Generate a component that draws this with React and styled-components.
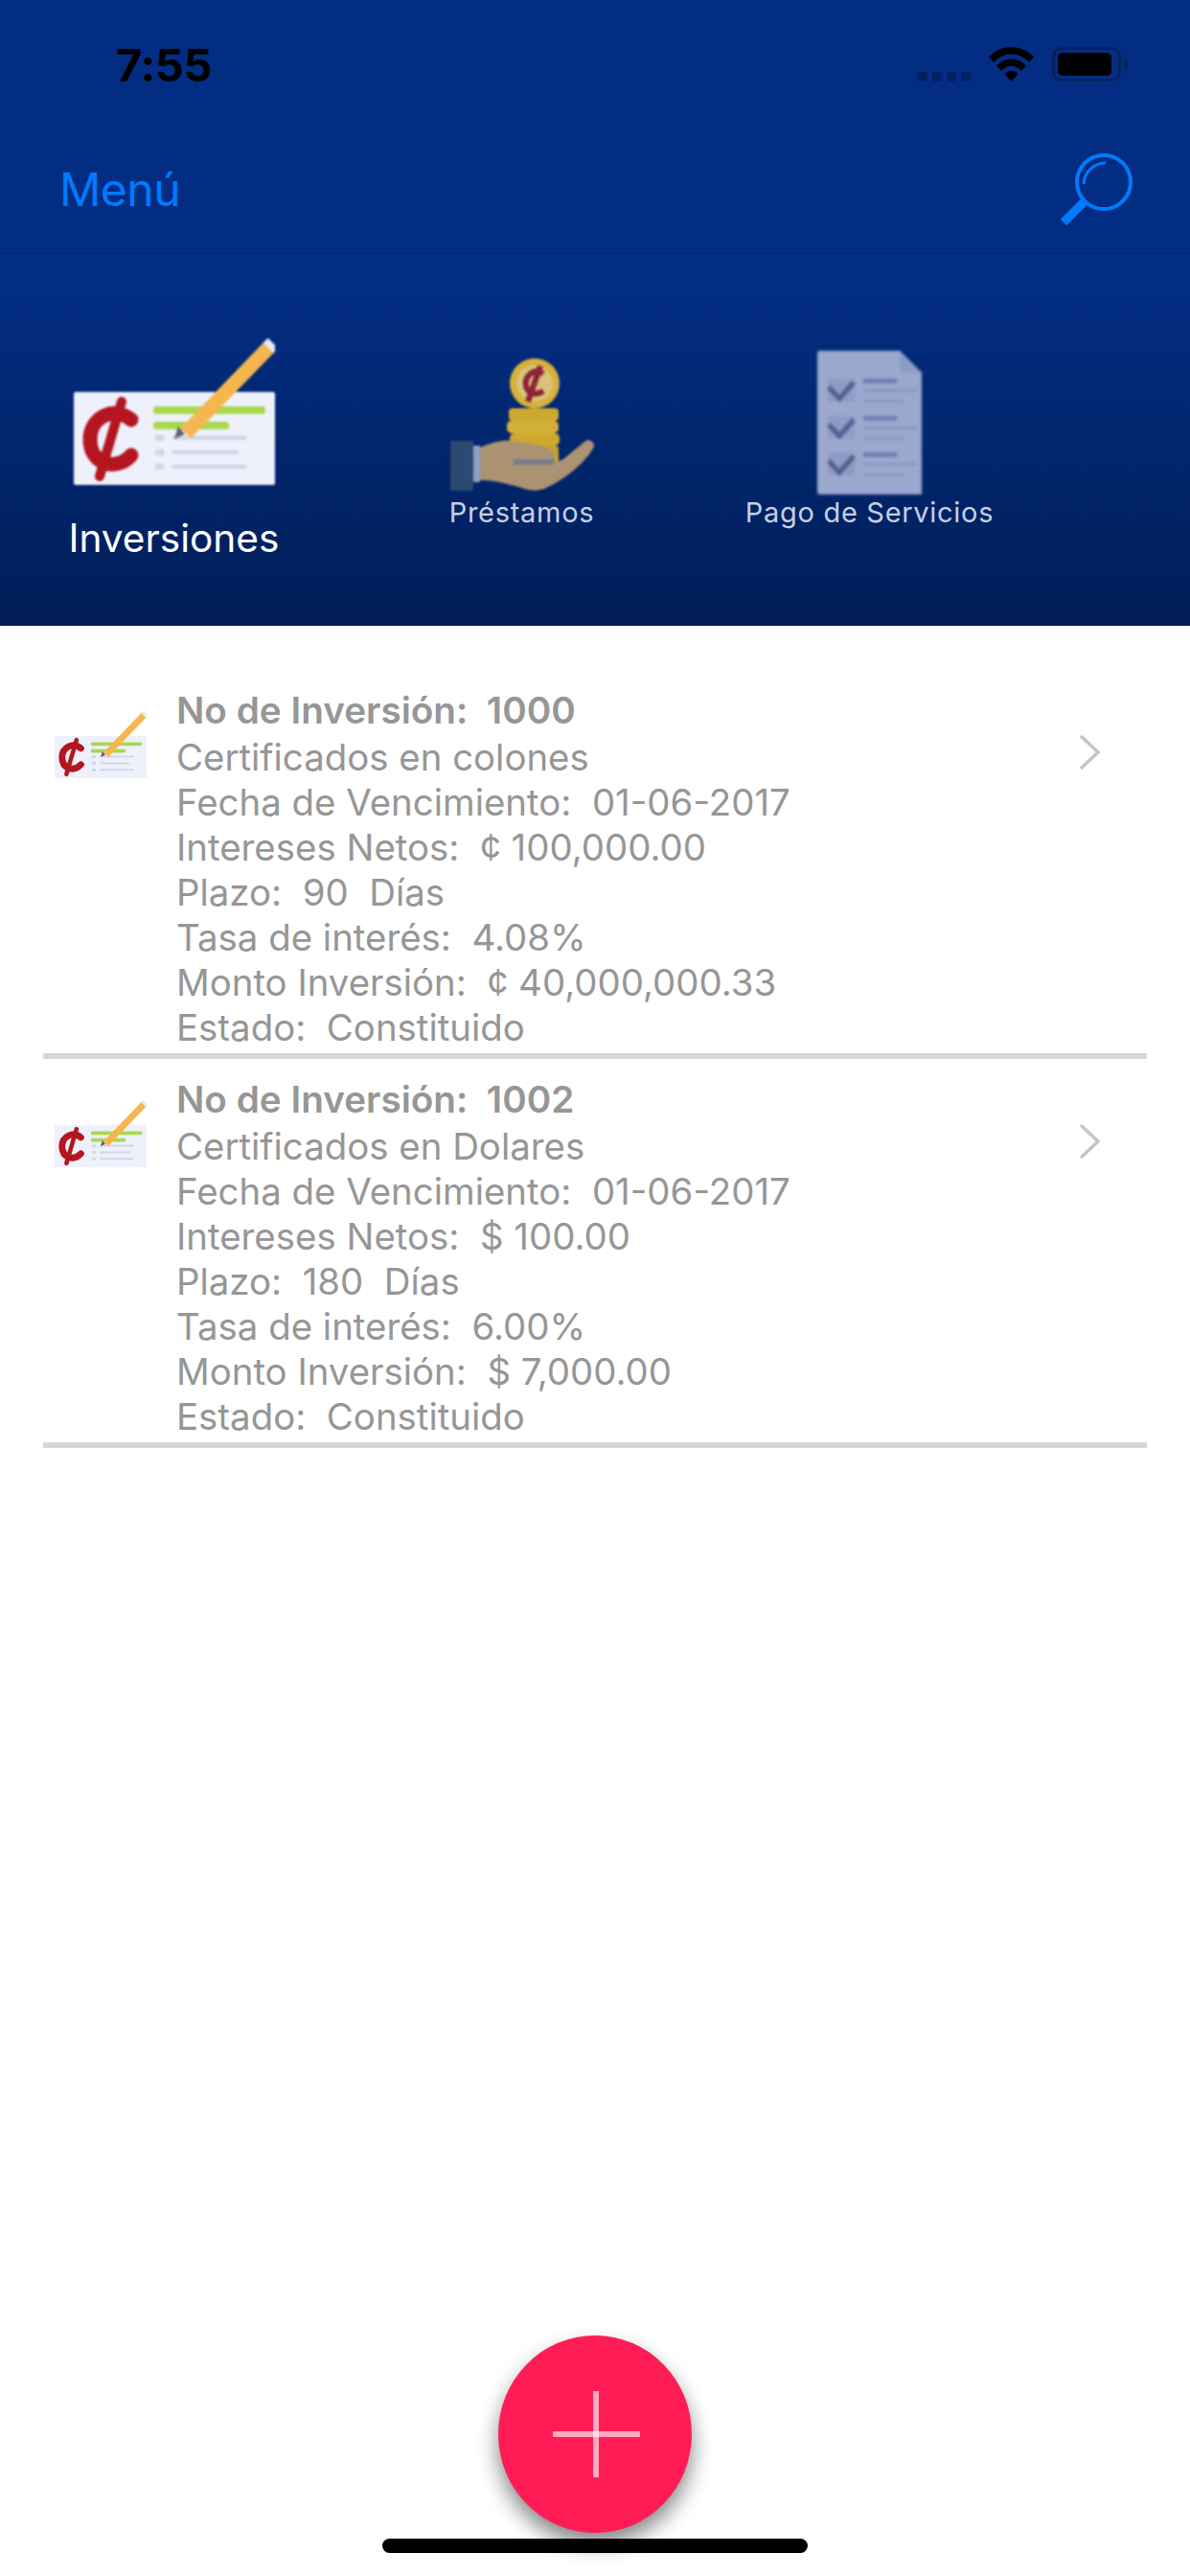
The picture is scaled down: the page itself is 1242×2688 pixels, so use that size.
import React from 'react';
import styled, { createGlobalStyle } from 'styled-components';

const GlobalStyle = createGlobalStyle`
  html, body {
    margin: 0;
    padding: 0;
    background: #fff;
  }
  body {
    font-family: Inter, "Noto Sans", "Liberation Sans", sans-serif;
  }
`;

const Page = styled.div`
  position: relative;
  width: 1242px;
  height: 2688px;
  overflow: hidden;
  background: #fff;
`;

const NavArea = styled.header`
  background: #032d83;
  border-bottom: 1px solid #02215f;
`;

const StatusBar = styled.div`
  height: 132px;
  display: flex;
  align-items: flex-start;
  justify-content: space-between;
  padding: 49px 72px 0 121px;
  box-sizing: border-box;
`;

const Time = styled.span`
  font-size: 47px;
  line-height: 38px;
  font-weight: 700;
  letter-spacing: -0.3px;
  color: #000;
`;

const StatusIcons = styled.div`
  display: flex;
  align-items: flex-start;
`;

const Dots = styled.div`
  display: flex;
  gap: 5px;
  margin: 26px 19px 0 0;
`;

const Dot = styled.i`
  display: block;
  width: 10px;
  height: 10px;
  border-radius: 3px;
  background: #02215f;
`;

const WifiIcon = styled.svg`
  width: 47px;
  height: 36px;
  margin-right: 19px;
`;

const Battery = styled.div`
  position: relative;
  width: 72px;
  height: 36px;
  box-sizing: border-box;
  border: 3px solid #02215f;
  border-radius: 10px;
  padding: 3px;
  &::after {
    content: '';
    position: absolute;
    right: -10px;
    top: 9px;
    width: 4px;
    height: 12px;
    border-radius: 0 6px 6px 0;
    background: #02215f;
  }
`;

const BatteryFill = styled.div`
  width: 56px;
  height: 24px;
  border-radius: 5px;
  background: #000;
`;

const NavBar = styled.div`
  height: 132px;
  display: flex;
  align-items: flex-start;
  justify-content: space-between;
  padding: 28px 60px 0 62px;
  box-sizing: border-box;
`;

const MenuLink = styled.span`
  font-size: 48px;
  line-height: 56px;
  margin-top: 10px;
  letter-spacing: -0.5px;
  color: #007aff;
`;

const SearchIcon = styled.svg`
  width: 75px;
  height: 75px;
`;

const Tabs = styled.nav`
  height: 388px;
  display: grid;
  grid-template-columns: repeat(3, 363px);
  background: linear-gradient(#032f87, #001d56);
`;

const Tab = styled.div`
  display: flex;
  flex-direction: column;
  align-items: center;
  padding-top: ${(p) => p.$top}px;
`;

const TabLabel = styled.span`
  white-space: nowrap;
  color: ${(p) => (p.$active ? '#fff' : '#c6cfe2')};
  font-size: ${(p) => (p.$active ? '40.6px' : '29px')};
  line-height: ${(p) => (p.$active ? '48px' : '36px')};
  margin-top: ${(p) => p.$gap}px;
  letter-spacing: ${(p) => (p.$active ? '0' : '0.7px')};
`;

const Blurred = styled.svg`
  display: block;
  flex: none;
  filter: blur(${(p) => p.$blur || 1.1}px);
`;

const List = styled.main`
  padding-top: 46px;
`;

const Row = styled.article`
  margin: 0 45px;
  height: 406px;
  box-sizing: border-box;
  padding: 16px 0 0 12px;
  border-bottom: 6px solid #d6d6d6;
  display: flex;
  align-items: flex-start;
`;

const RowIcon = styled.div`
  flex: none;
  width: 96px;
  margin: 27px 31px 0 0;
`;

const RowText = styled.div`
  flex: 1;
  color: #969696;
  font-size: 38.4px;
  line-height: 47px;
  white-space: pre;
`;

const RowTitle = styled.div`
  font-weight: 600;
  font-size: 38.7px;
  line-height: 52px;
`;

const Chevron = styled.svg`
  flex: none;
  width: 22px;
  height: 38px;
  margin: 51px 49px 0 0;
`;

const Fab = styled.button`
  position: absolute;
  left: 520px;
  top: 2437px;
  width: 202px;
  height: 206px;
  padding: 0;
  border: none;
  border-radius: 50%;
  background: #ff1c55;
  box-shadow: 0 12px 22px rgba(0, 0, 0, 0.48);
  &::before,
  &::after {
    content: '';
    position: absolute;
    background: rgba(255, 255, 255, 0.62);
  }
  &::before {
    left: 57px;
    top: 100px;
    width: 91px;
    height: 6px;
  }
  &::after {
    left: 99px;
    top: 58px;
    width: 6px;
    height: 90px;
  }
`;

const HomeBar = styled.div`
  position: absolute;
  left: 399px;
  top: 2649px;
  width: 444px;
  height: 15px;
  border-radius: 8px;
  background: #000;
`;

const CheckArt = ({ width, height, blur }) => (
  <Blurred $blur={blur} width={width} height={height} viewBox="0 0 210 153">
    <rect x="0" y="56" width="210" height="97" rx="2" fill="#eef0fb" />
    <rect x="83" y="71" width="117" height="8" rx="3" fill="#a9d84f" />
    <rect x="83" y="87" width="79" height="8" rx="3" fill="#a9d84f" />
    <g fill="#cfd6e6">
      <rect x="85" y="101" width="9" height="6" />
      <rect x="85" y="116" width="9" height="6" />
      <rect x="85" y="131" width="9" height="6" />
      <rect x="103" y="102" width="77" height="4" />
      <rect x="103" y="117" width="68" height="4" />
      <rect x="103" y="132" width="77" height="4" />
    </g>
    <g fill="none" stroke="#b5151f" strokeLinecap="round">
      <path d="M60 85 C42 70 17 82 17 106 C17 131 44 140 60 122" strokeWidth="15" />
      <path d="M50 66 L27 144" strokeWidth="10" />
    </g>
    <path d="M117 99 L206 7" stroke="#f6b64f" strokeWidth="15" />
    <path d="M203 10 L208 5" stroke="#e6ebf7" strokeWidth="15" />
    <path d="M116 100 L105 105 L109 92 Z" fill="#5c6070" />
  </Blurred>
);

const LoanArt = () => (
  <Blurred width={150} height={139} viewBox="0 0 150 139">
    <circle cx="88" cy="27" r="26" fill="#d6b13c" />
    <circle cx="88" cy="27" r="19" fill="#d9c27a" />
    <path d="M97 17 C86 10 77 21 79 30 C81 38 90 40 97 35 M94 9 L81 46" fill="none" stroke="#8e2238" strokeWidth="6" />
    <g fill="#cda92e">
      <rect x="61" y="53" width="52" height="13" rx="4" />
      <rect x="59" y="66" width="54" height="13" rx="5" fill="#d3b039" />
      <rect x="62" y="79" width="52" height="13" rx="5" />
      <rect x="61" y="92" width="52" height="20" rx="4" fill="#c8a52c" />
    </g>
    <rect x="0" y="87" width="24" height="52" fill="#2c4a70" />
    <rect x="24" y="92" width="7" height="38" fill="#8aa3c4" />
    <path d="M31 94 C45 88 58 84 72 88 C85 90 98 92 106 97 C110 101 110 106 108 110 L118 106 L140 88 C145 84 150 88 150 93 C143 108 118 129 98 137 C90 140 82 139 74 136 C60 132 44 128 31 128 Z" fill="#ab9272" />
    <rect x="66" y="106" width="42" height="6" fill="#7b7a8c" />
  </Blurred>
);

const BillArt = () => (
  <Blurred $blur={1.4} width={109} height={150} viewBox="0 0 109 150">
    <path d="M2 0 H86 L109 23 V150 H2 Q0 150 0 148 V2 Q0 0 2 0 Z" fill="#9aa8cd" />
    <path d="M86 0 L109 23 H90 Q86 23 86 19 Z" fill="#8c9cc5" />
    {[0, 39, 77].map((y) => (
      <g key={y} transform={`translate(0 ${y})`}>
        <rect x="11" y="29" width="28" height="24" fill="#8c9cc5" />
        <path d="M12 38 L23 50 L38 33" fill="none" stroke="#505f8d" strokeWidth="5" />
        <rect x="48" y="29" width="35" height="5" fill="#6f80b0" />
        <rect x="48" y="40" width="56" height="3" fill="#8797bf" />
        <rect x="48" y="51" width="42" height="3" fill="#8797bf" />
      </g>
    ))}
  </Blurred>
);

const investments = [
  {
    id: 1000,
    lines: [
      'Certificados en colones',
      'Fecha de Vencimiento:  01-06-2017',
      'Intereses Netos:  ¢ 100,000.00',
      'Plazo:  90  Días',
      'Tasa de interés:  4.08%',
      'Monto Inversión:  ¢ 40,000,000.33',
      'Estado:  Constituido',
    ],
  },
  {
    id: 1002,
    lines: [
      'Certificados en Dolares',
      'Fecha de Vencimiento:  01-06-2017',
      'Intereses Netos:  $ 100.00',
      'Plazo:  180  Días',
      'Tasa de interés:  6.00%',
      'Monto Inversión:  $ 7,000.00',
      'Estado:  Constituido',
    ],
  },
];

export default function App() {
  return (
    <Page>
      <GlobalStyle />
      <NavArea>
        <StatusBar>
          <Time>7:55</Time>
          <StatusIcons>
            <Dots>
              <Dot />
              <Dot />
              <Dot />
              <Dot />
            </Dots>
            <WifiIcon viewBox="0 0 47 36">
              <path d="M0 10.5 C13 -3.5 34 -3.5 47 10.5 L42 16 C31 4.5 16 4.5 5 16 Z" />
              <path d="M8 19.5 C17 10 30 10 39 19.5 L34 25 C27 18 20 18 13 25 Z" />
              <path d="M16.5 28 C21 23.5 26 23.5 30.5 28 L23.5 36 Z" />
            </WifiIcon>
            <Battery>
              <BatteryFill />
            </Battery>
          </StatusIcons>
        </StatusBar>
        <NavBar>
          <MenuLink>Menú</MenuLink>
          <SearchIcon viewBox="0 0 75 75" fill="none" stroke="#007aff">
            <circle cx="45" cy="30" r="28" strokeWidth="4" />
            <path d="M24 32 A23 23 0 0 1 47 10" strokeWidth="3" />
            <path d="M25 50 L3 72" strokeWidth="9" />
          </SearchIcon>
        </NavBar>
      </NavArea>

      <Tabs>
        <Tab $top={88}>
          <CheckArt width={210} height={153} />
          <TabLabel $active $gap={32}>Inversiones</TabLabel>
        </Tab>
        <Tab $top={108}>
          <LoanArt />
          <TabLabel $gap={5}>Préstamos</TabLabel>
        </Tab>
        <Tab $top={101}>
          <BillArt />
          <TabLabel $gap={1}>Pago de Servicios</TabLabel>
        </Tab>
      </Tabs>

      <List>
        {investments.map((item) => (
          <Row key={item.id}>
            <RowIcon>
              <CheckArt width={96} height={70} blur={0.3} />
            </RowIcon>
            <RowText>
              <RowTitle>{`No de Inversión:  ${item.id}`}</RowTitle>
              {item.lines.map((line) => (
                <div key={line}>{line}</div>
              ))}
            </RowText>
            <Chevron viewBox="0 0 22 38" fill="none" stroke="#c4c4c7" strokeWidth="3.5">
              <path d="M2 2 L20 19 L2 36" />
            </Chevron>
          </Row>
        ))}
      </List>

      <Fab aria-label="Agregar" />
      <HomeBar />
    </Page>
  );
}
